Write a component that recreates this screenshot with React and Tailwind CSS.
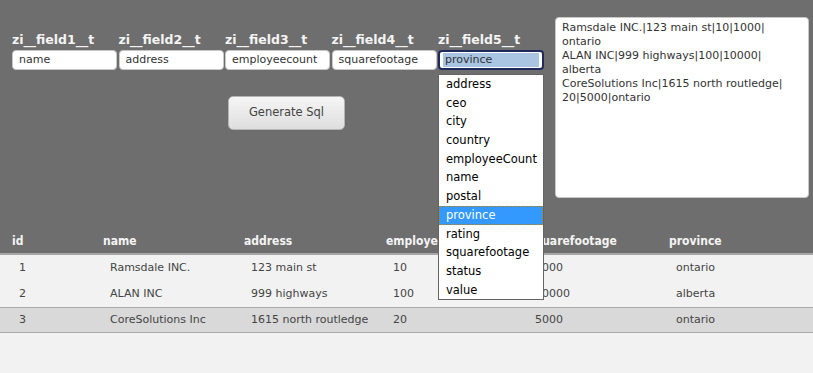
import { useState } from "react";

// ── Data ───────────────────────────────────────────────────
const fields = [
  { label: "zi__field1__t", value: "name" },
  { label: "zi__field2__t", value: "address" },
  { label: "zi__field3__t", value: "employeecount" },
  { label: "zi__field4__t", value: "squarefootage" },
];

const options = [
  "address", "ceo", "city", "country", "employeeCount", "name",
  "postal", "province", "rating", "squarefootage", "status", "value",
];

const rows = [
  { id: 1, name: "Ramsdale INC.", address: "123 main st", count: 10, sqft: 1000, province: "ontario" },
  { id: 2, name: "ALAN INC", address: "999 highways", count: 100, sqft: 10000, province: "alberta" },
  { id: 3, name: "CoreSolutions Inc", address: "1615 north routledge", count: 20, sqft: 5000, province: "ontario", selected: true },
];

const cols = ["w-[91px]", "w-[141px]", "w-[142px]", "w-[142px]", "w-[141px]", "flex-1"];

export default function App() {
  const [selected, setSelected] = useState("province");

  return (
    <div className="w-[813px] h-[373px] bg-[#f2f2f2] font-['DejaVu_Sans',sans-serif] text-[11px] relative overflow-hidden">
      {/* ── Top panel ── */}
      <div className="h-[228px] bg-[#6e6e6e] flex">
        <div className="w-[555px] pl-[12px] pt-[33px]">
          <div className="flex gap-[1.5px]">
            {fields.map((f) => (
              <div key={f.label} className="w-[105px]">
                <div className="h-[17px] font-bold text-[#f4f4f4] text-[12.5px] leading-[14px]">
                  {f.label}
                </div>
                <div className="h-[20px] bg-white border border-[#c8c8c8] rounded-[4px] pl-[6px] leading-[18px] text-[#333]">
                  {f.value}
                </div>
              </div>
            ))}
            <div className="w-[106px]">
              <div className="h-[17px] font-bold text-[#f4f4f4] text-[12.5px] leading-[14px]">
                zi__field5__t
              </div>
              <div className="h-[20px] bg-white border-2 border-[#1c2b5e] rounded-[4px] px-[3px] py-[1px]">
                <div className="h-[14px] bg-[#a9c5e2] leading-[14px] pl-[2px] text-[#333]">{selected}</div>
              </div>
            </div>
          </div>

          <button className="mt-[26px] ml-[216px] w-[117px] h-[34px] rounded-[5px] border border-[#b5b5b5] bg-gradient-to-b from-[#f6f6f6] to-[#dedede] text-[#444] text-[11.5px]">
            Generate Sql
          </button>
        </div>

        <div className="mt-[17px] w-[254px] h-[181px] bg-white border border-[#c8c8c8] rounded-[4px] px-[6px] pt-[3px] text-[#333] leading-[14px]">
          Ramsdale INC.|123 main st|10|1000|
          <br />ontario
          <br />ALAN INC|999 highways|100|10000|
          <br />alberta
          <br />CoreSolutions Inc|1615 north routledge|
          <br />20|5000|ontario
        </div>
      </div>

      {/* ── Table ── */}
      <div>
        <div className="flex h-[27px] items-center bg-[#6e6e6e] text-[#f4f4f4] font-bold font-['DejaVu_Sans_Condensed',sans-serif] text-[12px] border-b-2 border-[#a6a6a6]">
          {["id", "name", "address", "employeeCount", "squarefootage", "province"].map((h, i) => (
            <div key={h} className={`${cols[i]} pl-[12px]`}>{h}</div>
          ))}
        </div>
        {rows.map((r) => (
          <div
            key={r.id}
            className={`flex items-center h-[26px] text-[#444] ${r.selected ? "bg-[#d9d9d9] border-y border-[#ababab]" : ""}`}
          >
            {[r.id, r.name, r.address, r.count, r.sqft, r.province].map((v, i) => (
              <div key={i} className={`${cols[i]} pl-[19px]`}>{v}</div>
            ))}
          </div>
        ))}
      </div>

      {/* ── Open dropdown ── */}
      <div className="absolute left-[438px] top-[74px] w-[106px] h-[226px] bg-white border border-[#646464]">
        {options.map((o) => (
          <div
            key={o}
            onClick={() => setSelected(o)}
            className={`h-[18.7px] leading-[17px] pl-[6px] text-[11.5px] ${
              o === selected
                ? "bg-[#3399ff] text-white border border-dotted border-[#c08000]"
                : "text-black border border-transparent"
            }`}
          >
            {o}
          </div>
        ))}
      </div>
    </div>
  );
}
